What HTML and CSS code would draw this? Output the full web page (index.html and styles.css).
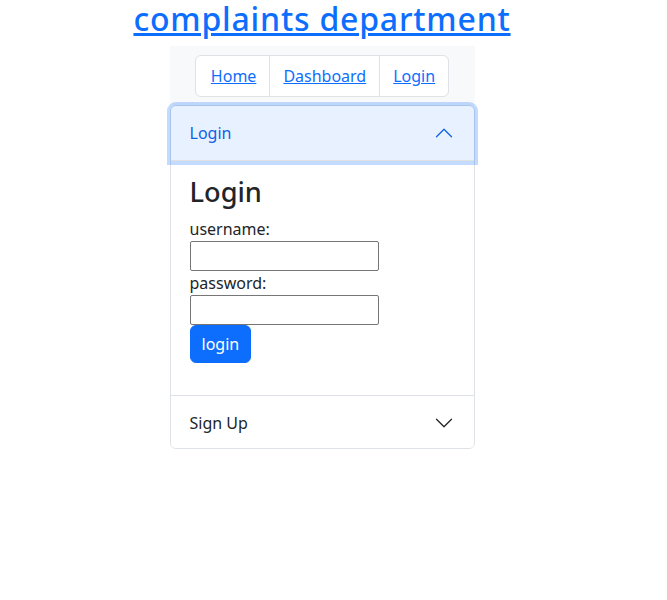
FILE: index.html
```html
<!DOCTYPE html>
<html>
<head>
<meta charset="utf-8">
<link rel="stylesheet" href="styles.css">
</head>
<body>
<div class="page">
  <h1 class="title"><a href="#">complaints department</a></h1>
  <div class="column">
    <nav class="topnav">
      <ul class="navlist">
        <li class="navitem"><a href="#">Home</a></li>
        <li class="navitem"><a href="#">Dashboard</a></li>
        <li class="navitem"><a href="#">Login</a></li>
      </ul>
    </nav>
    <div class="accordion">
      <div class="acc-item">
        <button class="acc-btn active">
          <span>Login</span>
          <svg class="chev" viewBox="0 0 16 16" width="20" height="20"><path fill="none" stroke="#0c63e4" stroke-linecap="round" stroke-linejoin="round" d="M2 11L8 5L14 11"/></svg>
        </button>
        <div class="acc-body">
          <h2 class="form-title">Login</h2>
          <form class="form">
            <label class="lbl">username:</label>
            <input class="field" type="text">
            <label class="lbl">password:</label>
            <input class="field" type="password">
            <button type="button" class="btn-primary">login</button>
          </form>
        </div>
      </div>
      <div class="acc-item last">
        <button class="acc-btn">
          <span>Sign Up</span>
          <svg class="chev" viewBox="0 0 16 16" width="20" height="20"><path fill="none" stroke="#212529" stroke-linecap="round" stroke-linejoin="round" d="M2 5L8 11L14 5"/></svg>
        </button>
      </div>
    </div>
  </div>
</div>
</body>
</html>
```

FILE: styles.css
```css
* { box-sizing: border-box; }
body {
  margin: 0;
  font-family: "Noto Sans", "Open Sans", sans-serif;
  font-size: 16px;
  line-height: 1.5;
  color: #212529;
  background: #fff;
}
.page {
  width: 644px;
}
.title {
  margin: 0 0 8px;
  font-size: 32px;
  font-weight: 500;
  line-height: 1.2;
  letter-spacing: 0.8px;
  text-align: center;
}
.title a, .navitem a { color: #0d6efd; }
.column {
  width: 305px;
  margin: 0 auto;
}
.topnav {
  background: #f8f9fa;
  padding: 9px 0 8px;
  display: flex;
  justify-content: center;
}
.navlist {
  list-style: none;
  margin: 0;
  padding: 0;
  display: flex;
  border: 1px solid #dee2e6;
  border-radius: 6px;
  background: #fff;
}
.navitem {
  padding: 8px 13px;
  border-left: 1px solid #dee2e6;
}
.navitem:first-child { padding-left: 15px; }
.navitem:first-child { border-left: none; }
.accordion {
  border: 1px solid #dee2e6;
  border-radius: 6px;
}
.acc-item + .acc-item { border-top: 1px solid #dee2e6; }
.acc-btn {
  width: 100%;
  display: flex;
  align-items: center;
  justify-content: space-between;
  padding: 15px 20px 16px 19px;
  border: 0;
  background: #fff;
  font: inherit;
  color: #212529;
  text-align: left;
}
.acc-btn.active {
  background: #e7f1ff;
  color: #0c63e4;
  border-radius: 5px 5px 0 0;
  box-shadow: inset 0 -1px 0 #dee2e6, 0 0 0 4px rgba(13,110,253,.25);
  position: relative;
}
.last .acc-btn { padding: 15px 20px 13px 19px; border-radius: 0 0 5px 5px; }
.chev { display: block; }
.acc-body {
  padding: 15px 20px 32px 19px;
}
.form-title {
  margin: 0 0 8px;
  font-size: 27.2px;
  font-weight: 500;
  line-height: 1.2;
}
.form {
  display: flex;
  flex-direction: column;
  align-items: flex-start;
}
.lbl { line-height: 24px; }
.field {
  width: 189px;
  height: 30px;
  border: 1px solid #767676;
  border-radius: 2px;
  padding: 1px 2px;
  font: inherit;
}
.btn-primary {
  padding: 6px 11px;
  border: 1px solid #0d6efd;
  background: #0d6efd;
  color: #fff;
  border-radius: 6px;
  font: inherit;
  line-height: 24px;
}
```
